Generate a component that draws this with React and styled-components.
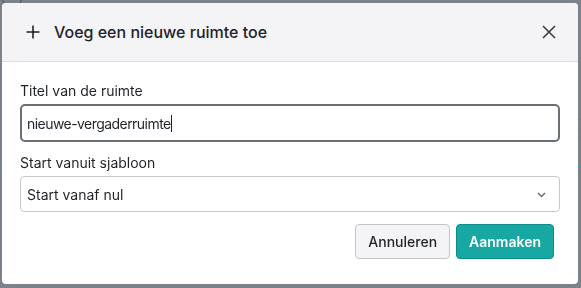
import styled, { createGlobalStyle } from "styled-components";

const GlobalStyle = createGlobalStyle`
  html, body {
    margin: 0;
    padding: 0;
    background: #7b8289;
    font-family: Inter, "Noto Sans", sans-serif;
  }
`;

const App = () => {
  return (
    <>
      <GlobalStyle />
      <StPage>
        <StAvatar />
        {[119, 129, 137, 166, 171].map((top) => (
          <StRowLine key={top} style={{ top }} />
        ))}
      </StPage>
      <StOverlay>
        <StModal>
          <StHeader>
            <StTitleGroup>
              <svg width="14" height="14" viewBox="0 0 14 14">
                <path d="M7 0.5v13M0.5 7h13" stroke="#1f2328" strokeWidth="1.6" />
              </svg>
              <h2>Voeg een nieuwe ruimte toe</h2>
            </StTitleGroup>
            <StCloseButton aria-label="Sluiten">
              <svg width="14" height="14" viewBox="0 0 14 14">
                <path d="M1 1l12 12M13 1L1 13" stroke="#3a3d42" strokeWidth="1.6" />
              </svg>
            </StCloseButton>
          </StHeader>
          <StBody>
            <StField>
              <label>Titel van de ruimte</label>
              <StInput $focused>
                <StValue $tight>nieuwe-vergaderruimte</StValue>
                <StCaret />
              </StInput>
            </StField>
            <StField>
              <label>Start vanuit sjabloon</label>
              <StInput>
                <StValue>Start vanaf nul</StValue>
                <StChevron width="9" height="6" viewBox="0 0 9 6">
                  <path d="M1 1l3.5 3.5L8 1" fill="none" stroke="#6a6e75" strokeWidth="1.5" />
                </StChevron>
              </StInput>
            </StField>
            <StFooter>
              <StButton>Annuleren</StButton>
              <StButton $primary>Aanmaken</StButton>
            </StFooter>
          </StBody>
        </StModal>
      </StOverlay>
    </>
  );
};

export default App;

const StPage = styled.div`
  position: relative;
  width: 581px;
  height: 288px;
  overflow: hidden;
`;
const StAvatar = styled.div`
  position: absolute;
  left: 2px;
  top: -12px;
  width: 18px;
  height: 18px;
  border-radius: 50%;
  border: 1.5px solid #4a5058;
`;
const StRowLine = styled.div`
  position: absolute;
  left: 0;
  right: 0;
  height: 1px;
  background: #4f8f92;
`;
const StOverlay = styled.div`
  position: fixed;
  inset: 0;
  padding: 3px 3px 4px 2px;
  display: flex;
`;
const StModal = styled.div`
  flex: 1;
  display: flex;
  flex-direction: column;
  background: #fff;
  border-radius: 4px;
  overflow: hidden;
`;
const StHeader = styled.div`
  height: 59px;
  box-sizing: border-box;
  display: flex;
  align-items: center;
  justify-content: space-between;
  padding: 0 22px 0 24px;
  background: #f4f4f6;
  border-bottom: 1px solid #dcdde0;
`;
const StTitleGroup = styled.div`
  display: flex;
  align-items: center;
  gap: 14px;

  h2 {
    margin: 0;
    font-size: 16px;
    font-weight: 500;
    color: #1f2328;
  }
`;
const StCloseButton = styled.button`
  border: none;
  background: none;
  padding: 0;
  display: flex;
  cursor: pointer;
`;
const StBody = styled.div`
  display: flex;
  flex-direction: column;
  padding: 20px 18px 0 18px;
`;
const StField = styled.div`
  display: flex;
  flex-direction: column;
  gap: 5px;
  margin-bottom: 12px;

  label {
    font-size: 14px;
    color: #1f2328;
    line-height: 17px;
  }
`;
const StInput = styled.div`
  position: relative;
  height: ${(p) => (p.$focused ? "38px" : "36px")};
  box-sizing: border-box;
  display: flex;
  align-items: center;
  color: #1f2328;
  border: ${(p) => (p.$focused ? "2px solid #6b6f76" : "1px solid #c6c7cb")};
  border-radius: ${(p) => (p.$focused ? "5px" : "4px")};
  padding-left: ${(p) => (p.$focused ? "5px" : "6px")};
`;
const StValue = styled.span`
  font-size: 14px;
  letter-spacing: ${(p) => (p.$tight ? "-0.55px" : "0")};
`;
const StCaret = styled.span`
  display: inline-block;
  width: 1px;
  height: 17px;
  background: #1f2328;
`;
const StChevron = styled.svg`
  position: absolute;
  right: 13px;
  top: 15px;
`;
const StFooter = styled.div`
  display: flex;
  justify-content: flex-end;
  gap: 6px;
  padding-right: 6px;
`;
const StButton = styled.button`
  height: 35px;
  padding: 0 12px;
  font-family: Inter, "Noto Sans", sans-serif;
  font-size: 14px;
  font-weight: ${(p) => (p.$primary ? 600 : 500)};
  color: ${(p) => (p.$primary ? "#fff" : "#1f2328")};
  background: ${(p) => (p.$primary ? "#17a8a4" : "#f4f4f6")};
  border: 1px solid ${(p) => (p.$primary ? "#128c88" : "#c4c5c9")};
  border-radius: 4px;
`;
